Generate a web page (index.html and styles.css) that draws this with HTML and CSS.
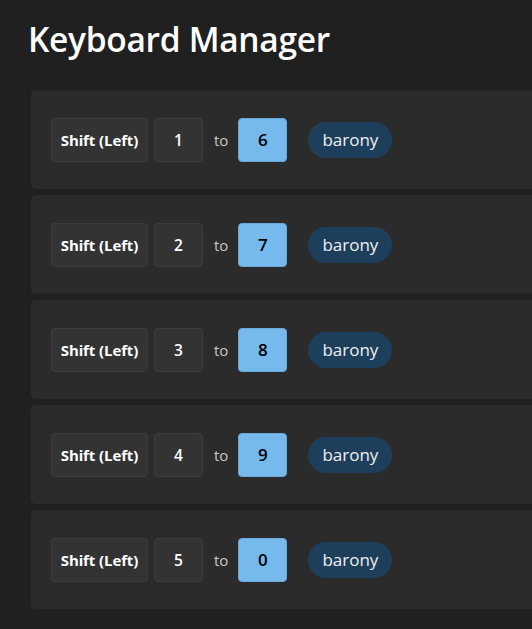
FILE: index.html
```html
<!DOCTYPE html>
<html>
<head>
<meta charset="utf-8">
<link rel="stylesheet" href="styles.css">
</head>
<body>
<h1 class="title">Keyboard Manager</h1>
<div class="list">
  <div class="card">
    <span class="key mod">Shift (Left)</span><span class="key">1</span><span class="to">to</span><span class="key target">6</span><span class="app">barony</span>
  </div>
  <div class="card">
    <span class="key mod">Shift (Left)</span><span class="key">2</span><span class="to">to</span><span class="key target">7</span><span class="app">barony</span>
  </div>
  <div class="card">
    <span class="key mod">Shift (Left)</span><span class="key">3</span><span class="to">to</span><span class="key target">8</span><span class="app">barony</span>
  </div>
  <div class="card">
    <span class="key mod">Shift (Left)</span><span class="key">4</span><span class="to">to</span><span class="key target">9</span><span class="app">barony</span>
  </div>
  <div class="card">
    <span class="key mod">Shift (Left)</span><span class="key">5</span><span class="to">to</span><span class="key target">0</span><span class="app">barony</span>
  </div>
</div>
</body>
</html>
```
FILE: styles.css
```css
html, body {
  margin: 0;
  padding: 0;
  background: #202020;
  overflow: hidden;
}
body {
  font-family: "Open Sans", "Noto Sans", sans-serif;
  color: #ffffff;
  padding: 0 0 0 31px;
}
.title {
  margin: 0 0 0 -3px;
  padding-top: 17px;
  font-size: 33.5px;
  font-weight: 600;
  line-height: 44px;
  box-sizing: border-box;
  height: 90px;
  letter-spacing: -0.3px;
}
.list {
  display: flex;
  flex-direction: column;
  gap: 6px;
  width: 520px;
}
.card {
  background: #2b2b2b;
  border-radius: 5px;
  height: 99px;
  display: flex;
  align-items: center;
  padding-left: 20px;
  box-sizing: border-box;
}
.key {
  box-sizing: border-box;
  height: 44px;
  min-width: 49px;
  display: flex;
  align-items: center;
  justify-content: center;
  background: #333333;
  border: 1px solid #3d3d3d;
  border-radius: 4px;
  font-weight: 600;
  font-size: 15.5px;
  color: #ffffff;
  margin-right: 6px;
}
.key.mod {
  width: 97px;
  font-size: 15px;
  font-weight: 700;
  letter-spacing: -0.1px;
}
.key.target {
  background: #76b9ed;
  border-color: #6aa9da;
  color: #000000;
  font-size: 17px;
  font-weight: 600;
  margin-right: 0;
}
.to {
  color: #c8c8c8;
  font-size: 15px;
  margin: 0 10px 0 5px;
}
.app {
  margin-left: 21px;
  height: 36px;
  width: 84px;
  box-sizing: border-box;
  border-radius: 18px;
  background: #1e3f5c;
  display: flex;
  align-items: center;
  justify-content: center;
  font-size: 17px;
  color: #f0f0f0;
}
```
